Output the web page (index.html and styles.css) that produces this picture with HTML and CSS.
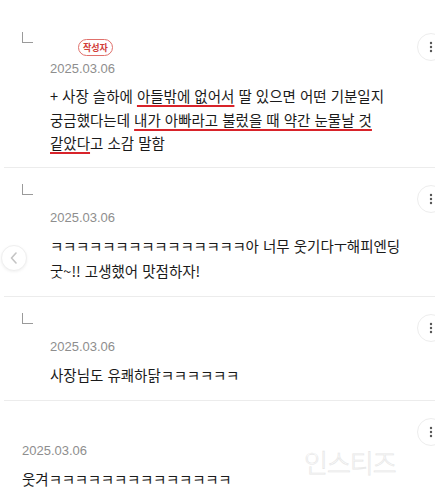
FILE: index.html
```html
<!DOCTYPE html>
<html lang="ko">
<head>
  <meta charset="UTF-8" />
  <meta name="viewport" content="width=device-width, initial-scale=1.0"/>
  <title>댓글</title>
  <link rel="stylesheet" href="styles.css">
</head>
<body>

  <div id="commentList">

    <div class="comment">
      <span class="replyMark"></span>
      <div class="commentBody">
        <div class="commentHead writerHead"><span class="badge">작성자</span></div>
        <div class="date">2025.03.06</div>
        <div class="text tight">+ 사장 슬하에 <u class="mark">아들밖에 없어서</u> 딸 있으면 어떤 기분일지 궁금했다는데 <u class="mark">내가 아빠라고 불렀을 때 약간 눈물날 것</u> <u class="mark">같았다</u>고 소감 말함</div>
      </div>
      <button class="moreButton"><svg width="4" height="12" viewBox="0 0 4 12"><circle cx="2" cy="2" r="1.2"/><circle cx="2" cy="6" r="1.2"/><circle cx="2" cy="10" r="1.2"/></svg></button>
    </div>

    <div class="comment">
      <span class="replyMark"></span>
      <div class="commentBody">
        <div class="commentHead"></div>
        <div class="date">2025.03.06</div>
        <div class="text"><span class="kk">ㅋㅋㅋㅋㅋㅋㅋㅋㅋㅋㅋㅋㅋㅋㅋ</span>아 너무 웃기다<span class="kk">ㅜ</span>해피엔딩 <span class="nowrap">굿~!!</span> 고생했어 맛점하자!</div>
      </div>
      <button class="moreButton"><svg width="4" height="12" viewBox="0 0 4 12"><circle cx="2" cy="2" r="1.2"/><circle cx="2" cy="6" r="1.2"/><circle cx="2" cy="10" r="1.2"/></svg></button>
    </div>

    <div class="comment">
      <span class="replyMark"></span>
      <div class="commentBody">
        <div class="commentHead"></div>
        <div class="date">2025.03.06</div>
        <div class="text">사장님도 유쾌하닭<span class="kk">ㅋㅋㅋㅋㅋㅋ</span></div>
      </div>
      <button class="moreButton"><svg width="4" height="12" viewBox="0 0 4 12"><circle cx="2" cy="2" r="1.2"/><circle cx="2" cy="6" r="1.2"/><circle cx="2" cy="10" r="1.2"/></svg></button>
    </div>

    <div class="comment">
      <div class="commentBody">
        <div class="commentHead"></div>
        <div class="date">2025.03.06</div>
        <div class="text">웃겨<span class="kk">ㅋㅋㅋㅋㅋㅋㅋㅋㅋㅋㅋㅋㅋㅋ</span></div>
      </div>
      <button class="moreButton"><svg width="4" height="12" viewBox="0 0 4 12"><circle cx="2" cy="2" r="1.2"/><circle cx="2" cy="6" r="1.2"/><circle cx="2" cy="10" r="1.2"/></svg></button>
    </div>

  </div>

  <button id="prevButton"><svg width="10" height="12" viewBox="0 0 10 12"><path d="M7 1 L2.5 6 L7 11" fill="none" stroke="#c4c4c4" stroke-width="1.6" stroke-linecap="round" stroke-linejoin="round"/></svg></button>

  <div id="watermark">인스티즈</div>

</body>
</html>
```

FILE: styles.css
```css
body {
  margin: 0;
  padding: 0;
  overflow: hidden;
  background-color: #fff;
  font-family: "Noto Sans CJK KR", sans-serif;
  color: #1a1a1a;
}

#commentList {
  padding-top: 16px;
}

.comment {
  display: flex;
  align-items: flex-start;
  margin-left: 4px;
  padding: 16px 0 13px 18px;
  border-bottom: 1px solid #ececec;
}

.comment:first-child {
  padding-bottom: 12px;
}

.replyMark {
  flex-shrink: 0;
  width: 11px;
  height: 11px;
  margin-right: 17px;
  border-left: 1px solid #9a9a9a;
  border-bottom: 1px solid #9a9a9a;
  box-sizing: border-box;
}

.commentBody {
  flex: 1;
  min-width: 0;
}

.commentHead {
  height: 24px;
}

.writerHead {
  height: 27px;
  padding-top: 3px;
  box-sizing: border-box;
  display: flex;
  align-items: center;
}

.badge {
  display: inline-block;
  margin-left: 28px;
  height: 17px;
  line-height: 15px;
  padding: 0 4px;
  border: 1px solid #e0706b;
  border-radius: 9px;
  box-sizing: border-box;
  color: #d2403a;
  font-size: 9px;
  font-weight: bold;
}

.date {
  height: 20px;
  line-height: 20px;
  margin-bottom: 5px;
  font-family: "Liberation Sans", sans-serif;
  font-size: 13px;
  color: #8e8e8e;
}

.text {
  font-size: 14.5px;
  line-height: 25px;
  word-break: keep-all;
}

.text.tight {
  line-height: 23.5px;
}

.kk {
  letter-spacing: -0.3px;
}

.nowrap {
  white-space: nowrap;
}

.mark {
  text-decoration: underline;
  text-decoration-color: #d8232a;
  text-decoration-thickness: 2px;
  text-underline-offset: 3px;
}

.moreButton {
  flex-shrink: 0;
  width: 28px;
  height: 28px;
  margin: 1px -10px 0 8px;
  padding: 0;
  border: 1px solid #ededed;
  border-radius: 50%;
  background-color: #fff;
  display: flex;
  align-items: center;
  justify-content: center;
  fill: #555;
}

#prevButton {
  position: absolute;
  left: 1px;
  top: 245px;
  width: 26px;
  height: 26px;
  padding: 0;
  border: 1px solid #efefef;
  border-radius: 50%;
  background-color: #fff;
  box-shadow: 0 1px 3px rgba(0,0,0,0.06);
  display: flex;
  align-items: center;
  justify-content: center;
}

#watermark {
  position: absolute;
  left: 304px;
  top: 446px;
  font-size: 26px;
  font-weight: 300;
  line-height: 32px;
  letter-spacing: -1px;
  color: #fff;
  -webkit-text-stroke: 0.7px #e6e6e6;
}
```
